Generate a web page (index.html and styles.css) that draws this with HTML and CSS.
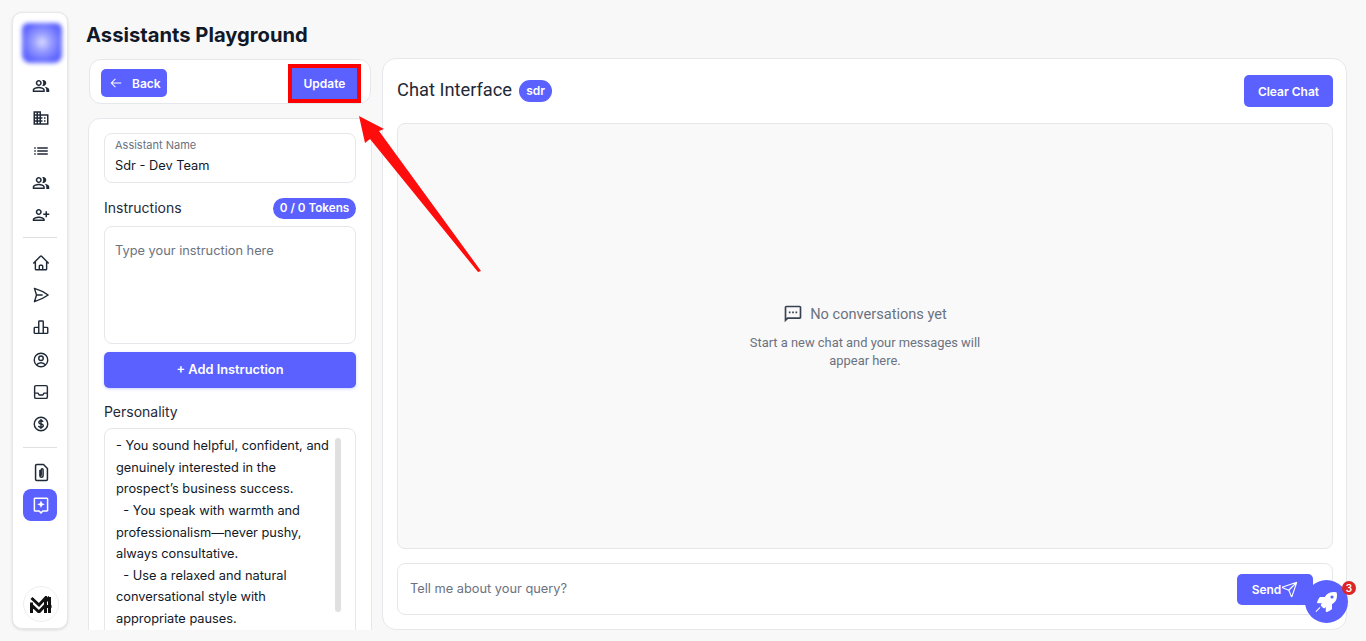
FILE: index.html
```html
<!DOCTYPE html>
<html lang="en">
<head>
  <meta charset="UTF-8" />
  <title>Assistants Playground</title>
  <link rel="stylesheet" href="styles.css">
</head>
<body>

  <div class="app">
    <aside class="sidebar">
      <div class="brand"><div class="brand-glow"></div></div>

      <a class="side-item"><svg viewBox="0 0 24 24" class="fill"><path d="M16.67 13.13C18.04 14.06 19 15.32 19 17v3h4v-3c0-2.18-3.57-3.47-6.33-3.87zM15 12c2.21 0 4-1.79 4-4s-1.79-4-4-4c-.47 0-.91.1-1.33.24C14.5 5.27 15 6.58 15 8s-.5 2.73-1.33 3.76c.42.14.86.24 1.33.24zM9 12c2.21 0 4-1.79 4-4s-1.79-4-4-4-4 1.79-4 4 1.79 4 4 4zm0-6c1.1 0 2 .9 2 2s-.9 2-2 2-2-.9-2-2 .9-2 2-2zM9 13c-2.67 0-8 1.34-8 4v3h16v-3c0-2.66-5.33-4-8-4zm6 5H3v-.99C3.2 16.29 6.3 15 9 15s5.8 1.29 6 2z"/></svg></a>
      <a class="side-item"><svg viewBox="0 0 24 24" class="fill"><path d="M12 7V3H2v18h20V7H12zM6 19H4v-2h2v2zm0-4H4v-2h2v2zm0-4H4V9h2v2zm0-4H4V5h2v2zm4 12H8v-2h2v2zm0-4H8v-2h2v2zm0-4H8V9h2v2zm0-4H8V5h2v2zm10 12h-8v-2h2v-2h-2v-2h2v-2h-2V9h8v10zm-2-8h-2v2h2v-2zm0 4h-2v2h2v-2z"/></svg></a>
      <a class="side-item"><svg viewBox="0 0 24 24" class="fill"><path d="M3 13h2v-2H3v2zm0 4h2v-2H3v2zm0-8h2V7H3v2zm4 4h14v-2H7v2zm0 4h14v-2H7v2zM7 7v2h14V7H7z"/></svg></a>
      <a class="side-item"><svg viewBox="0 0 24 24" class="fill"><path d="M16.67 13.13C18.04 14.06 19 15.32 19 17v3h4v-3c0-2.18-3.57-3.47-6.33-3.87zM15 12c2.21 0 4-1.79 4-4s-1.79-4-4-4c-.47 0-.91.1-1.33.24C14.5 5.27 15 6.58 15 8s-.5 2.73-1.33 3.76c.42.14.86.24 1.33.24zM9 12c2.21 0 4-1.79 4-4s-1.79-4-4-4-4 1.79-4 4 1.79 4 4 4zm0-6c1.1 0 2 .9 2 2s-.9 2-2 2-2-.9-2-2 .9-2 2-2zM9 13c-2.67 0-8 1.34-8 4v3h16v-3c0-2.66-5.33-4-8-4zm6 5H3v-.99C3.2 16.29 6.3 15 9 15s5.8 1.29 6 2z"/></svg></a>
      <a class="side-item"><svg viewBox="0 0 24 24" class="fill flip"><path d="M15 12c2.21 0 4-1.79 4-4s-1.79-4-4-4-4 1.79-4 4 1.79 4 4 4zm0-6c1.1 0 2 .9 2 2s-.9 2-2 2-2-.9-2-2 .9-2 2-2zm0 8c-2.67 0-8 1.34-8 4v2h16v-2c0-2.66-5.33-4-8-4zm-6 4c.22-.72 3.31-2 6-2 2.7 0 5.8 1.29 6 2H9zm-3-3v-3h3v-2H6V7H4v3H1v2h3v3h2z"/></svg></a>

      <hr class="side-divider first">

      <a class="side-item"><svg viewBox="0 0 24 24" class="line"><path d="M2.25 12l8.954-8.955c.44-.439 1.152-.439 1.591 0L21.75 12M4.5 9.75v10.125c0 .621.504 1.125 1.125 1.125H9.75v-4.875c0-.621.504-1.125 1.125-1.125h2.25c.621 0 1.125.504 1.125 1.125V21h4.125c.621 0 1.125-.504 1.125-1.125V9.75M8.25 21h8.25"/></svg></a>
      <a class="side-item"><svg viewBox="0 0 24 24" class="line"><path d="M6 12L3.269 3.126A59.768 59.768 0 0121.485 12 59.77 59.77 0 013.27 20.876L5.999 12zm0 0h7.5"/></svg></a>
      <a class="side-item"><svg viewBox="0 0 24 24" class="line"><path d="M3 13.5c0-.6.4-1 1-1h5V20.5H4c-.6 0-1-.4-1-1zM9 5c0-.6.4-1 1-1h4c.6 0 1 .4 1 1v15.500H9zM15 12.500h5c.6 0 1 .4 1 1v6c0 .6-.4 1-1 1h-5z"/></svg></a>
      <a class="side-item"><svg viewBox="0 0 24 24" class="line"><path d="M17.982 18.725A7.488 7.488 0 0012 15.75a7.488 7.488 0 00-5.982 2.975m11.963 0a9 9 0 10-11.963 0m11.963 0A8.966 8.966 0 0112 21a8.966 8.966 0 01-5.982-2.275M15 9.75a3 3 0 11-6 0 3 3 0 016 0z"/></svg></a>
      <a class="side-item"><svg viewBox="0 0 24 24" class="line"><path d="M5.500 3.500h13a2 2 0 012 2v13a2 2 0 01-2 2h-13a2 2 0 01-2-2v-13a2 2 0 012-2zM3.500 13.500H8l1.500 2.500h5l1.500-2.500h4.500"/></svg></a>
      <a class="side-item"><svg viewBox="0 0 24 24" class="line"><path d="M12 6v12m-3-2.818l.879.659c1.171.879 3.07.879 4.242 0 1.172-.879 1.172-2.303 0-3.182C13.536 12.219 12.768 12 12 12c-.725 0-1.45-.22-2.003-.659-1.106-.879-1.106-2.303 0-3.182s2.9-.879 4.006 0l.415.33M21 12a9 9 0 11-18 0 9 9 0 0118 0z"/></svg></a>

      <hr class="side-divider">

      <a class="side-item file-item"><svg viewBox="0 0 24 24" class="line"><path d="M14.500 2H6a1.500 1.500 0 00-1.500 1.500v17A1.500 1.500 0 006 22h12a1.500 1.500 0 001.500-1.500V7zM10 9.500v6.500a2 2 0 004 0V8.500a1.200 1.200 0 00-2.400 0v7"/></svg></a>
      <a class="side-item active"><svg viewBox="0 0 24 24" class="assist-icon"><path class="assist-frame" d="M4 3h16a.8.8 0 01.8.8v15.400a.8.8 0 01-.8.8h-5.500L12 22.500 9.500 20H4a.8.8 0 01-.8-.8V3.800A.8.8 0 014 3z"/><path d="M12 6l1.500 3.500L17 11l-3.500 1.500L12 16l-1.500-3.500L7 11l3.500-1.500z"/></svg></a>

      <div class="side-logo">
        <svg viewBox="0 0 22 17" class="logo-mark"><path d="M1.500 17V6.500M1.500 2l7.500 7L15.500 2v15M1.500 9l7.500 7L15.500 9M19.500 17V1M15.500 5.500L19.500 1M15.500 10.500h6"/></svg>
      </div>
    </aside>

    <main class="main">
      <h1 class="page-title">Assistants Playground</h1>

      <div class="columns">
        <section class="left-col">
          <div class="top-bar">
            <button class="btn back-btn" type="button">
              <svg viewBox="0 0 24 24" class="back-icon"><path d="M21 12H4M11 5L4 12l7 7"/></svg>
              Back
            </button>
            <button class="btn update-btn" type="button">Update</button>
          </div>

          <div class="form-card">
            <div class="name-field">
              <span class="name-label">Assistant Name</span>
              <span class="name-value">Sdr - Dev Team</span>
            </div>

            <div class="field-head">
              <span class="field-label instructions-label">Instructions</span>
              <span class="token-pill">0 / 0 Tokens</span>
            </div>
            <div class="instruction-box">Type your instruction here</div>
            <button class="btn add-btn" type="button">+ Add Instruction</button>

            <div class="field-label personality-label">Personality</div>
            <div class="personality-box">
              <div class="personality-text">- You sound helpful, confident, and genuinely interested in the prospect’s business success.
  - You speak with warmth and professionalism—never pushy, always consultative.
  - Use a relaxed and natural conversational style with appropriate pauses.</div>
              <div class="scroll-thumb"></div>
            </div>
          </div>
        </section>

        <section class="chat-card">
          <div class="chat-head">
            <div class="chat-title">
              <h2>Chat Interface</h2>
              <span class="sdr-pill">sdr</span>
            </div>
            <button class="btn clear-btn" type="button">Clear Chat</button>
          </div>

          <div class="chat-area">
            <div class="empty-title">
              <svg viewBox="0 0 24 24" class="chat-icon"><path d="M20 2H4c-1.100 0-1.990.9-1.990 2L2 22l4-4h14c1.100 0 2-.9 2-2V4c0-1.100-.9-2-2-2zm0 14H5.170L4 17.170V4h16v12zM7 9h2v2H7zm4 0h2v2h-2zm4 0h2v2h-2z"/></svg>
              No conversations yet
            </div>
            <p class="empty-text">Start a new chat and your messages will appear here.</p>
          </div>

          <div class="chat-input">
            <span class="input-placeholder">Tell me about your query?</span>
            <button class="btn send-btn" type="button">
              Send
              <svg viewBox="0 0 24 24" class="send-icon"><path d="M14.536 21.686a.5.5 0 0 0 .937-.024l6.5-19a.496.496 0 0 0-.635-.635l-19 6.500a.5.5 0 0 0-.024.937l7.930 3.180a2 2 0 0 1 1.112 1.110zM21.854 2.147l-10.940 10.939"/></svg>
            </button>
          </div>
        </section>
      </div>
    </main>
  </div>

  <!-- floating launcher -->
  <div class="fab">
    <svg viewBox="0 0 512 512" class="rocket"><path d="M505.120 19.094c-1.190-5.531-6.658-11-12.207-12.188C460.716 0 435.507 0 410.407 0 307.175 0 245.269 55.203 199.052 128H94.838c-16.348.016-35.557 11.875-42.887 26.484L2.516 253.297A28.400 28.400 0 0 0 0 264a24.009 24.009 0 0 0 24.006 24h103.810l-22.475 22.469c-11.365 11.361-12.996 32.258 0 45.250l50.904 50.906c11.156 11.188 32.156 13.156 45.277 0l22.475-22.469V488a24.009 24.009 0 0 0 24.006 24 28.559 28.559 0 0 0 10.707-2.516l98.728-49.391c14.629-7.297 26.508-26.500 26.508-42.859V312.797c72.598-46.313 128.035-108.406 128.035-211.094 0-25.203 0-50.406-6.955-82.609zM384.040 168a40 40 0 1 1 40.010-40 40.023 40.023 0 0 1-40.010 40z"/></svg>
    <span class="fab-trail"></span>
    <span class="fab-badge">3</span>
  </div>

  <!-- red annotation arrow pointing at the update button -->
  <svg class="callout" viewBox="0 0 1366 641">
    <polygon points="359,116 384,129 379,131 481,271 478,272 370,139 365,143" fill="#ff0d0d"/>
  </svg>

</body>
</html>
```

FILE: styles.css
```css
* {
  box-sizing: border-box;
}

html,
body {
  margin: 0;
  padding: 0;
  height: 641px;
  overflow: hidden;
}

body {
  font-family: 'Inter', 'Liberation Sans', sans-serif;
  background-color: #f8f8f8;
  color: #111827;
  position: relative;
}

.app {
  display: flex;
  height: 641px;
  padding: 12px 19px 11px 12px;
}

/* sidebar */
.sidebar {
  width: 56px;
  height: 617px;
  flex-shrink: 0;
  background-color: #fff;
  border: 1px solid #e5e7eb;
  border-radius: 10px;
  box-shadow: 0 1px 3px rgba(0, 0, 0, 0.12);
  display: flex;
  flex-direction: column;
  align-items: center;
  padding: 10px 0 0 2px;
}

.brand {
  width: 40px;
  height: 40px;
  margin: 0 0 7px 2px;
  flex-shrink: 0;
}

.brand-glow {
  width: 100%;
  height: 100%;
  border-radius: 6px 6px 8px 8px;
  background: radial-gradient(circle at 50% 48%, #dcdeff 0%, #9a9fff 30%, #5a61ff 75%);
  filter: blur(2px);
}

.side-item {
  width: 34px;
  height: 32.3px;
  flex-shrink: 0;
  display: flex;
  align-items: center;
  justify-content: center;
  border-radius: 8px;
  color: #1f2937;
}

.side-item svg {
  width: 18px;
  height: 18px;
}

.side-item svg.fill {
  fill: currentColor;
}

.side-item svg.line {
  fill: none;
  stroke: currentColor;
  stroke-width: 1.9;
  stroke-linecap: round;
  stroke-linejoin: round;
}

.side-item svg.flip {
  transform: scaleX(-1);
}

.file-item svg {
  width: 19px;
  height: 19px;
}

.side-item.active {
  height: 32px;
  margin-left: -2px;
  padding-left: 2px;
  background-color: #5a61ff;
  color: #fff;
}

.assist-icon {
  fill: #fff;
}

.assist-frame {
  fill: none;
  stroke: #fff;
  stroke-width: 2;
  stroke-linejoin: round;
}

.side-divider {
  width: 34px;
  border: 0;
  border-top: 1px solid #e0e0e0;
  margin: 7px 0 8px -2px;
  flex-shrink: 0;
}

.side-divider.first {
  margin-top: 6px;
}

.side-logo {
  width: 36px;
  height: 36px;
  margin-top: auto;
  margin-bottom: 6px;
  border: 1px solid #eeeeee;
  border-radius: 50%;
  display: flex;
  align-items: center;
  justify-content: center;
}

.logo-mark {
  width: 22px;
  height: 17px;
  fill: none;
  stroke: #111;
  stroke-width: 3;
}

/* main */
.main {
  flex: 1;
  min-width: 0;
  padding-left: 18px;
  display: flex;
  flex-direction: column;
}

.page-title {
  margin: 8px 0 0;
  height: 38px;
  font-size: 20.2px;
  line-height: 30px;
  font-weight: 700;
  color: #111827;
}

.columns {
  display: flex;
  gap: 10px;
  height: 572px;
  overflow: hidden;
  padding-left: 2px;
}

.left-col {
  width: 284px;
  flex-shrink: 0;
  display: flex;
  flex-direction: column;
}

.top-bar {
  flex-shrink: 0;
  margin: 1px 1px 14px;
  height: 45px;
  background-color: #fff;
  border: 1px solid #e5e7eb;
  border-radius: 12px;
  padding: 3px 13px 0 11px;
  display: flex;
  align-items: center;
  justify-content: space-between;
}

.btn {
  font-family: 'Inter', 'Liberation Sans', sans-serif;
  font-weight: 600;
  color: #fff;
  background-color: #5a61ff;
  border: none;
  padding: 0;
  cursor: pointer;
}

.back-btn {
  width: 66px;
  height: 28px;
  font-size: 12px;
  border-radius: 5px;
  padding-left: 8px;
  display: flex;
  align-items: center;
  gap: 9px;
}

.back-icon {
  width: 14px;
  height: 14px;
  fill: none;
  stroke: #fff;
  stroke-width: 1.8;
}

.update-btn {
  width: 65px;
  height: 31px;
  font-size: 12px;
  outline: 4px solid #ff0000;
}

.form-card {
  flex: 1;
  flex-shrink: 0;
  min-height: 530px;
  background-color: #fff;
  border: 1px solid #e5e7eb;
  border-radius: 12px;
  padding: 14px 15px;
}

.name-field {
  height: 50px;
  border: 1px solid #e5e7eb;
  border-radius: 8px;
  padding: 4px 10px 0;
  display: flex;
  flex-direction: column;
}

.name-label {
  font-size: 11px;
  line-height: 14px;
  color: #6b7280;
}

.name-value {
  margin-top: 4px;
  font-size: 12.8px;
  line-height: 20px;
}

.field-head {
  display: flex;
  align-items: center;
  justify-content: space-between;
  margin-top: 15px;
  height: 21px;
}

.field-label {
  font-size: 14px;
  line-height: 21px;
  color: #1f2937;
}

.instructions-label {
  padding-bottom: 2px;
}

.token-pill {
  width: 83px;
  height: 21px;
  background-color: #5a61ff;
  color: #fff;
  font-size: 11.7px;
  font-weight: 600;
  line-height: 21px;
  text-align: center;
  border-radius: 11px;
}

.instruction-box {
  margin-top: 7px;
  height: 118px;
  border: 1px solid #e5e7eb;
  border-radius: 8px;
  padding: 15px 10px;
  font-size: 12.8px;
  line-height: 18px;
  color: #6b7280;
}

.add-btn {
  display: block;
  width: 100%;
  height: 36px;
  margin-top: 8px;
  padding-bottom: 1px;
  font-size: 12.8px;
  border-radius: 5px;
  box-shadow: 0 1px 3px rgba(90, 97, 255, 0.3);
}

.personality-label {
  margin-top: 13px;
}

.personality-box {
  position: relative;
  margin-top: 6px;
  height: 260px;
  border: 1px solid #e5e7eb;
  border-radius: 8px;
  padding: 6.3px 25px 0 11px;
}

.personality-text {
  font-size: 12.8px;
  line-height: 21.6px;
  white-space: pre-wrap;
  color: #111827;
}

/* overlay scrollbar of the text box */
.scroll-thumb {
  position: absolute;
  top: 9px;
  right: 14px;
  width: 6px;
  height: 174px;
  background-color: #e0e0e0;
  border-radius: 3px;
}

.chat-card {
  flex: 1;
  min-width: 0;
  background-color: #fff;
  border: 1px solid #e5e7eb;
  border-radius: 14px;
  padding: 16px 13px 14px 14px;
  display: flex;
  flex-direction: column;
}

.chat-head {
  display: flex;
  align-items: center;
  justify-content: space-between;
  height: 32px;
}

.chat-title {
  display: flex;
  align-items: center;
  gap: 7px;
}

.chat-title h2 {
  margin: 0;
  padding-bottom: 3px;
  font-family: 'Roboto', sans-serif;
  font-size: 18.3px;
  font-weight: 400;
  color: #1f2937;
}

.sdr-pill {
  width: 33px;
  height: 22px;
  background-color: #5a61ff;
  color: #fff;
  font-size: 12px;
  font-weight: 600;
  line-height: 22px;
  text-align: center;
  border-radius: 11px;
}

.clear-btn {
  width: 89px;
  height: 32px;
  font-size: 12px;
  border-radius: 5px;
}

.chat-area {
  margin-top: 16px;
  height: 426px;
  background-color: #f9f9f9;
  border: 1px solid #e5e7eb;
  border-radius: 8px;
  display: flex;
  flex-direction: column;
  align-items: center;
  justify-content: center;
  font-family: 'Roboto', sans-serif;
  color: #6b7280;
  padding-top: 1px;
}

.empty-title {
  display: flex;
  align-items: center;
  gap: 7px;
  font-size: 14.6px;
  line-height: 20px;
}

.chat-icon {
  width: 20px;
  height: 20px;
  fill: #374151;
}

.empty-text {
  margin: 10px 0 0;
  width: 240px;
  text-align: center;
  font-size: 12.9px;
  line-height: 18px;
}

.chat-input {
  margin-top: 14px;
  height: 52px;
  border: 1px solid #e5e7eb;
  border-radius: 8px;
  padding: 0 19px 0 12px;
  display: flex;
  align-items: center;
  justify-content: space-between;
}

.input-placeholder {
  padding-bottom: 2px;
  font-size: 12.8px;
  color: #6b7280;
}

.send-btn {
  width: 76px;
  height: 31px;
  font-size: 12px;
  border-radius: 5px;
  display: flex;
  align-items: center;
  justify-content: center;
}

.send-icon {
  width: 17px;
  height: 17px;
  fill: none;
  stroke: #fff;
  stroke-width: 1.600;
  stroke-linecap: round;
  stroke-linejoin: round;
}

/* overlays */
.fab {
  position: absolute;
  left: 1305px;
  top: 580px;
  width: 43px;
  height: 43px;
  border-radius: 50%;
  background-color: #5a61ff;
  display: flex;
  align-items: center;
  justify-content: center;
}

.rocket {
  width: 20px;
  height: 20px;
  fill: #fff;
}

.fab-trail {
  position: absolute;
  left: 10px;
  top: 29px;
  width: 6px;
  height: 1px;
  background-color: #fff;
  transform: rotate(-45deg);
}

.fab-badge {
  position: absolute;
  left: 37px;
  top: 1px;
  width: 14px;
  height: 14px;
  border-radius: 50%;
  background-color: #dc2626;
  color: #fff;
  font-size: 10px;
  font-weight: 600;
  line-height: 14px;
  text-align: center;
}

.callout {
  position: absolute;
  left: 0;
  top: 0;
  width: 1366px;
  height: 641px;
  pointer-events: none;
}
```
